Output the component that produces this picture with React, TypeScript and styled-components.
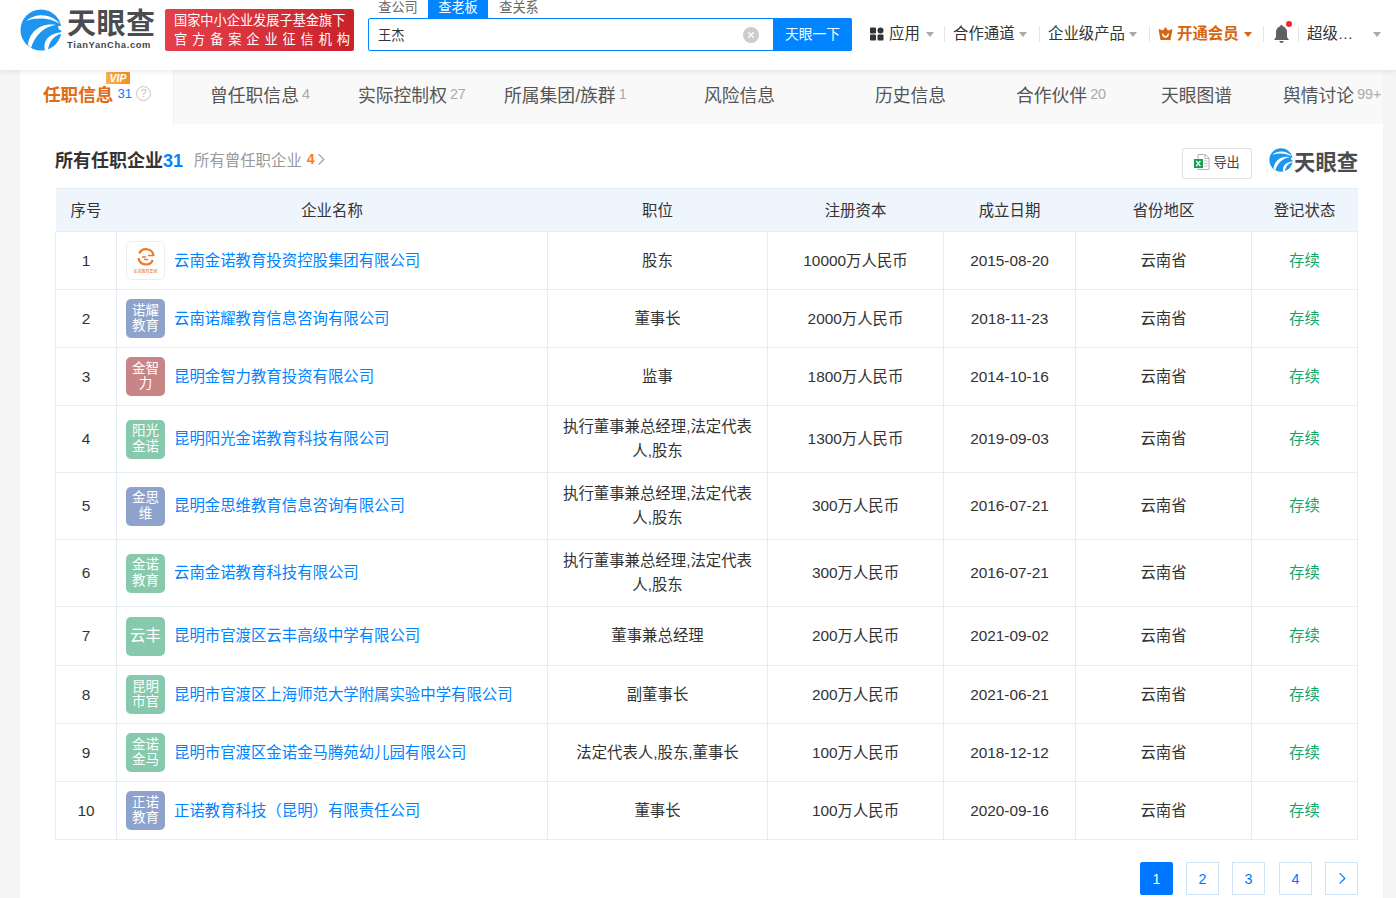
import React from "react";
import styled, { createGlobalStyle } from "styled-components";

const FONT = `"Liberation Sans", "Noto Sans CJK SC", sans-serif`;

const Global = createGlobalStyle`
  html, body { margin: 0; padding: 0; height: 898px; overflow: hidden; background: #f5f5f5; }
  body { font-family: ${FONT}; color: #333; }
  * { box-sizing: border-box; }
`;

const Header = styled.header`
  position: relative;
  z-index: 2;
  height: 70px;
  background: #fff;
  box-shadow: 0 1px 6px rgba(0, 0, 0, 0.1);
  display: flex;
  align-items: flex-start;
  padding-left: 20px;
`;
const LogoWrap = styled.div`
  display: flex;
  align-items: flex-start;
  width: 145px;
  padding-top: 9px;
  flex: none;
`;
const LogoWord = styled.div`
  margin-left: 5px;
  display: flex;
  flex-direction: column;
  width: 90px;
`;
const LogoCn = styled.div`
  font-size: 29px;
  line-height: 30px;
  font-weight: 700;
  color: #4a4c50;
  letter-spacing: 0.5px;
  white-space: nowrap;
`;
const LogoEn = styled.div`
  font-size: 9.4px;
  line-height: 12px;
  font-weight: 700;
  color: #44464a;
  letter-spacing: 0.62px;
  white-space: nowrap;
`;
const Banner = styled.div`
  width: 189px;
  height: 42px;
  margin-top: 9px;
  flex: none;
  border-radius: 2px;
  background: linear-gradient(90deg, #e5404a, #c9222a);
  color: #fff;
  font-size: 13.2px;
  line-height: 19px;
  padding: 1.5px 0 0 9px;
  white-space: nowrap;
`;
const BannerSpaced = styled.div`
  letter-spacing: 4.9px;
`;
const SearchBlock = styled.div`
  margin-left: 14px;
  width: 484px;
  flex: none;
`;
const SearchTabs = styled.div`
  display: flex;
  height: 18px;
  align-items: center;
`;
const SearchTab = styled.div<{ $on?: boolean; $w: number }>`
  width: ${(p) => p.$w}px;
  height: 18px;
  line-height: 15px;
  font-size: 13.2px;
  text-align: center;
  color: ${(p) => (p.$on ? "#fff" : "#666")};
  background: ${(p) => (p.$on ? "#0084ff" : "transparent")};
  overflow: hidden;
`;
const SearchRow = styled.div`
  height: 33px;
  display: flex;
  border: 1px solid #0084ff;
  border-radius: 2px;
  background: #fff;
`;
const SearchInput = styled.div`
  flex: 1;
  display: flex;
  align-items: center;
  justify-content: space-between;
  padding: 0 14px 0 9px;
  font-size: 13.2px;
  color: #333;
`;
const SearchBtn = styled.div`
  width: 79px;
  margin: -1px -1px -1px 0;
  background: #0084ff;
  border-radius: 0 2px 2px 0;
  color: #fff;
  font-size: 13.8px;
  line-height: 33px;
  text-align: center;
`;
const Nav = styled.nav`
  display: flex;
  align-items: center;
  height: 18px;
  margin-top: 25px;
  margin-left: 18px;
  flex: 1;
`;
const NavItem = styled.div<{ $w: number; $pad?: number; $gold?: boolean; $bold?: boolean; $sep?: boolean }>`
  width: ${(p) => p.$w}px;
  padding-left: ${(p) => p.$pad ?? 0}px;
  flex: none;
  display: flex;
  align-items: center;
  height: 16px;
  font-size: 15.4px;
  line-height: 16px;
  white-space: nowrap;
  color: ${(p) => (p.$gold ? "#d5650e" : "#333")};
  font-weight: ${(p) => (p.$bold ? 700 : 400)};
  border-right: ${(p) => (p.$sep ? "1px solid #e5e5e5" : "none")};
`;
const Caret = styled.span<{ $gold?: boolean; $gap?: number }>`
  width: 0;
  height: 0;
  margin-left: ${(p) => p.$gap ?? 6}px;
  border-left: 4px solid transparent;
  border-right: 4px solid transparent;
  border-top: 5px solid ${(p) => (p.$gold ? "#d5650e" : "#aaa")};
`;
const BellBox = styled.span`
  position: relative;
  display: block;
  width: 18px;
  height: 20px;
`;
const BellDot = styled.span`
  position: absolute;
  top: -3px;
  right: -1px;
  width: 6px;
  height: 6px;
  border-radius: 50%;
  background: #f5222d;
`;
const NavIcon = styled.span<{ $gap?: number }>`
  display: inline-flex;
  margin-right: ${(p) => p.$gap ?? 5}px;
`;

const TabsBar = styled.div`
  height: 54px;
  background: #f9f9f9;
  margin: 0 13px 0 20px;
  display: flex;
  align-items: stretch;
`;
const ActiveTab = styled.div`
  position: relative;
  width: 154px;
  background: #fff;
  border-right: 1px solid #f0f0f0;
  display: flex;
  align-items: center;
  padding: 0 0 7px 23px;
  flex: none;
`;
const ActiveLabel = styled.span`
  font-size: 17.6px;
  font-weight: 700;
  color: #e26a14;
  white-space: nowrap;
`;
const ActiveCount = styled.span`
  font-size: 13.2px;
  color: #0084ff;
  margin-left: 4px;
`;
const HelpIcon = styled.span`
  width: 15px;
  height: 15px;
  margin-left: 4px;
  border: 1px solid #c4c4c4;
  border-radius: 50%;
  color: #c0c0c0;
  font-size: 11px;
  line-height: 13px;
  text-align: center;
`;
const VipBadge = styled.span`
  position: absolute;
  left: 86px;
  top: 2px;
  width: 24px;
  height: 12px;
  background: linear-gradient(90deg, #f9b24e, #ef8f23);
  border-radius: 1px;
  color: #fff;
  font-size: 10.5px;
  font-weight: 700;
  font-style: italic;
  line-height: 12px;
  text-align: center;
`;
const TabTrack = styled.div`
  flex: 1;
  display: flex;
  padding-left: 36px;
`;
const Tab = styled.div<{ $w: number }>`
  width: ${(p) => p.$w}px;
  flex: none;
  height: 54px;
  padding-bottom: 7px;
  display: flex;
  align-items: center;
  white-space: nowrap;
  font-size: 17.8px;
  color: #555;
`;
const TabCount = styled.span`
  font-size: 14.3px;
  color: #aaa;
  margin-left: 3px;
`;

const Main = styled.main`
  margin: 0 13px 0 20px;
  height: 774px;
  background: #fff;
  padding: 0 25px 0 35px;
`;
const TitleRow = styled.div`
  height: 64px;
  display: flex;
  align-items: flex-start;
  padding-top: 25px;
`;
const Title = styled.h2`
  margin: 0;
  font-size: 18px;
  line-height: 24px;
  font-weight: 700;
  color: #333;
  white-space: nowrap;
`;
const TitleCount = styled.span`
  color: #0084ff;
`;
const Former = styled.div`
  display: flex;
  align-items: center;
  height: 20px;
  margin-left: 11px;
  font-size: 15.4px;
  color: #999;
  white-space: nowrap;
`;
const FormerCount = styled.b`
  color: #ff7a1a;
  margin: 0 2px 0 5px;
  font-size: 14.3px;
`;
const Spacer = styled.div`
  flex: 1;
`;
const Export = styled.div`
  width: 70px;
  height: 31px;
  margin-top: -1px;
  padding-bottom: 4px;
  border: 1px solid #e1e1e1;
  border-radius: 2px;
  display: flex;
  align-items: center;
  justify-content: center;
  gap: 3px;
  font-size: 13.2px;
  color: #444;
`;
const MiniLogo = styled.div`
  display: flex;
  align-items: center;
  margin-left: 17px;
  margin-top: -4px;
  height: 30px;
`;
const MiniWord = styled.span`
  font-size: 21.3px;
  font-weight: 700;
  color: #4a4c50;
  margin-left: 1px;
  white-space: nowrap;
`;

const Table = styled.table`
  width: 1302px;
  table-layout: fixed;
  border-collapse: collapse;
  font-size: 15.4px;
  color: #333;
`;
const Th = styled.th<{ $w: number }>`
  width: ${(p) => p.$w}px;
  height: 43px;
  padding: 0 0 3px;
  background: #eef5fc;
  border: 1px solid #e4ecf4;
  border-left: none;
  border-right: none;
  font-weight: 400;
  font-size: 15.4px;
  text-align: center;
`;
const Td = styled.td`
  padding: 0 15px;
  border: 1px solid #e4ecf4;
  text-align: center;
  line-height: 24px;
`;
const Tr = styled.tr<{ $h: number }>`
  height: ${(p) => p.$h}px;
`;
const NameTd = styled(Td)`
  padding: 0 0 0 9px;
  text-align: left;
`;
const NameCell = styled.div`
  display: flex;
  align-items: center;
  gap: 9px;
`;
const Avatar = styled.div<{ $bg: string; $big?: boolean }>`
  width: 39px;
  height: 39px;
  flex: none;
  display: flex;
  align-items: center;
  justify-content: center;
  text-align: center;
  border-radius: 5px;
  background: ${(p) => p.$bg};
  border: ${(p) => (p.$bg === "#fff" ? "1px solid #eee" : "none")};
  color: #fff;
  font-size: ${(p) => (p.$big ? "15.4px" : "13.5px")};
  line-height: 15.5px;
  padding: 0 2px 1px;
  flex-direction: column;
  white-space: nowrap;
`;
const LogoMini = styled.span`
  font-size: 4px;
  line-height: 5px;
  color: #e8772e;
  white-space: nowrap;
  margin-top: 2px;
`;
const CompanyLink = styled.a`
  color: #0084ff;
  font-size: 15.4px;
  white-space: nowrap;
`;
const Status = styled.span`
  color: #12a66a;
`;

const Pager = styled.div`
  margin-top: 22px;
  display: flex;
  justify-content: flex-end;
  gap: 13px;
  & > :nth-child(4) {
    margin-left: 1px;
  }
`;
const PageBtn = styled.div<{ $on?: boolean }>`
  width: 33px;
  height: 33px;
  border: 1px solid ${(p) => (p.$on ? "#0077ff" : "#cfe4fb")};
  border-radius: ${(p) => (p.$on ? "2px" : "0")};
  background: ${(p) => (p.$on ? "#0077ff" : "#fff")};
  color: ${(p) => (p.$on ? "#fff" : "#0077ff")};
  font-size: 14.3px;
  display: flex;
  align-items: center;
  justify-content: center;
`;

function Swirl({ size }: { size: number }) {
  return (
    <svg width={size} height={size} viewBox="0 0 42 42" style={{ flex: "none" }}>
      <circle cx="21" cy="21" r="20.500" fill="#1e96f0" />
      <path d="M6 12C16 3 32 5 40 15 30 9 18 8 6 12Z" fill="#fff" />
      <path d="M8 36C9 24 20 13 36 16 25 17 15 26 11 39Z" fill="#fff" />
      <path d="M25 41C23 33 27 25 42 23V24.500C33 27 29 33 28 41Z" fill="#fff" />
      <path d="M38 17L42 17V22L39 20.500Z" fill="#fff" />
    </svg>
  );
}

function XlsIcon() {
  return (
    <svg width="16" height="16" viewBox="0 0 16 16">
      <path d="M4 .5h7.500L15 4v11.500H4Z" fill="#fff" stroke="#b5b5b5" />
      <path d="M11 .5V4.500H15" fill="none" stroke="#b5b5b5" />
      <path d="M10 7h3.500M10 9.500h3.500M10 12h3.500" stroke="#c5c5c5" />
      <rect x="0" y="5" width="9" height="9" fill="#1b9d57" />
      <path d="M2.200 6.800l4.200 5.400M6.400 6.800l-4.200 5.400" stroke="#fff" strokeWidth="1.300" />
    </svg>
  );
}

function AppsIcon() {
  return (
    <svg width="14" height="14" viewBox="0 0 14 14" fill="#333">
      <rect x="0" y="0.500" width="6" height="6" rx="1" />
      <circle cx="10.500" cy="3.500" r="3" />
      <rect x="0" y="7.500" width="6" height="6" rx="1" />
      <rect x="7.500" y="7.500" width="6" height="6" rx="1" />
    </svg>
  );
}

function CrownIcon() {
  return (
    <svg width="15" height="14" viewBox="0 0 15 14">
      <path d="M7.500 0 10 3.500 14.500 2 12.500 13H2.500L.5 2 5 3.500Z" fill="#d5650e" />
      <path d="M4.500 6.500c.5 2.500 1.500 3.500 3 3.500s2.500-1 3-3.500" fill="none" stroke="#fff" strokeWidth="1.400" />
    </svg>
  );
}

function BellIcon() {
  return (
    <svg width="17" height="20" viewBox="0 0 17 20" fill="#5d6166">
      <path d="M8.500 1c.8 0 1.200.5 1.200 1.200C12.400 3 14 5.200 14 8v5l2 3H1l2-3V8c0-2.800 1.600-5 4.300-5.800C7.300 1.500 7.700 1 8.500 1Z" />
      <path d="M6.300 17h4.400c-.2 1.200-1.100 2-2.200 2s-2-.8-2.200-2Z" />
    </svg>
  );
}

function ClearIcon() {
  return (
    <svg width="16" height="16" viewBox="0 0 16 16">
      <circle cx="8" cy="8" r="8" fill="#ccc" />
      <path d="M5.200 5.200l5.600 5.600M10.800 5.200l-5.600 5.600" stroke="#fff" strokeWidth="1.300" />
    </svg>
  );
}

function Chevron({ color, size }: { color: string; size: number }) {
  return (
    <svg width={size} height={size * 1.6} viewBox="0 0 10 16">
      <path d="M2 1.500 8.500 8 2 14.500" fill="none" stroke={color} strokeWidth="1.500" />
    </svg>
  );
}

function GroupLogo() {
  return (
    <svg width="20" height="20" viewBox="0 0 20 20">
      <path d="M3.200 6.500A7.500 7.500 0 0 1 17.500 9" fill="none" stroke="#ea7a2c" strokeWidth="2.200" />
      <path d="M16.800 13A7.500 7.500 0 0 1 2.500 11" fill="none" stroke="#ea7a2c" strokeWidth="2.200" />
      <path d="M6 10h4M12 8.500h5M8 12.500h4" stroke="#ea7a2c" strokeWidth="1.600" />
    </svg>
  );
}

const GREEN = "#86c9ad";
const BLUE = "#8ea3cc";
const RED = "#c78585";

type Row = {
  n: number;
  h: number;
  av: string[];
  bg: string;
  name: string;
  role: string;
  cap: string;
  date: string;
};

const rows: Row[] = [
  { n: 1, h: 58, av: [], bg: "#fff", name: "云南金诺教育投资控股集团有限公司", role: "股东", cap: "10000万人民币", date: "2015-08-20" },
  { n: 2, h: 58, av: ["诺耀", "教育"], bg: BLUE, name: "云南诺耀教育信息咨询有限公司", role: "董事长", cap: "2000万人民币", date: "2018-11-23" },
  { n: 3, h: 58, av: ["金智", "力"], bg: RED, name: "昆明金智力教育投资有限公司", role: "监事", cap: "1800万人民币", date: "2014-10-16" },
  { n: 4, h: 67, av: ["阳光", "金诺"], bg: GREEN, name: "昆明阳光金诺教育科技有限公司", role: "执行董事兼总经理,法定代表人,股东", cap: "1300万人民币", date: "2019-09-03" },
  { n: 5, h: 67, av: ["金思", "维"], bg: BLUE, name: "昆明金思维教育信息咨询有限公司", role: "执行董事兼总经理,法定代表人,股东", cap: "300万人民币", date: "2016-07-21" },
  { n: 6, h: 67, av: ["金诺", "教育"], bg: GREEN, name: "云南金诺教育科技有限公司", role: "执行董事兼总经理,法定代表人,股东", cap: "300万人民币", date: "2016-07-21" },
  { n: 7, h: 59, av: ["云丰"], bg: GREEN, name: "昆明市官渡区云丰高级中学有限公司", role: "董事兼总经理", cap: "200万人民币", date: "2021-09-02" },
  { n: 8, h: 58, av: ["昆明", "市官"], bg: GREEN, name: "昆明市官渡区上海师范大学附属实验中学有限公司", role: "副董事长", cap: "200万人民币", date: "2021-06-21" },
  { n: 9, h: 58, av: ["金诺", "金马"], bg: GREEN, name: "昆明市官渡区金诺金马腾苑幼儿园有限公司", role: "法定代表人,股东,董事长", cap: "100万人民币", date: "2018-12-12" },
  { n: 10, h: 58, av: ["正诺", "教育"], bg: BLUE, name: "正诺教育科技（昆明）有限责任公司", role: "董事长", cap: "100万人民币", date: "2020-09-16" },
];

const tabs = [
  { w: 148, label: "曾任职信息", count: "4" },
  { w: 146, label: "实际控制权", count: "27" },
  { w: 200, label: "所属集团/族群", count: "1" },
  { w: 171, label: "风险信息" },
  { w: 141, label: "历史信息" },
  { w: 145, label: "合作伙伴", count: "20" },
  { w: 122, label: "天眼图谱" },
  { w: 100, label: "舆情讨论", count: "99+" },
];

export default function App() {
  return (
    <>
      <Global />
      <Header>
        <LogoWrap>
          <Swirl size={42} />
          <LogoWord>
            <LogoCn>天眼查</LogoCn>
            <LogoEn>TianYanCha.com</LogoEn>
          </LogoWord>
        </LogoWrap>
        <Banner>
          <div>国家中小企业发展子基金旗下</div>
          <BannerSpaced>官方备案企业征信机构</BannerSpaced>
        </Banner>
        <SearchBlock>
          <SearchTabs>
            <SearchTab $w={60}>查公司</SearchTab>
            <SearchTab $w={60} $on>查老板</SearchTab>
            <SearchTab $w={62}>查关系</SearchTab>
          </SearchTabs>
          <SearchRow>
            <SearchInput>
              王杰
              <ClearIcon />
            </SearchInput>
            <SearchBtn>天眼一下</SearchBtn>
          </SearchRow>
        </SearchBlock>
        <Nav>
          <NavItem $w={75} $sep>
            <NavIcon><AppsIcon /></NavIcon>应用<Caret />
          </NavItem>
          <NavItem $w={95} $pad={8} $sep>
            合作通道<Caret $gap={4} />
          </NavItem>
          <NavItem $w={110} $pad={8} $sep>
            企业级产品<Caret $gap={4} />
          </NavItem>
          <NavItem $w={114} $pad={8} $gold $bold $sep>
            <NavIcon $gap={4}><CrownIcon /></NavIcon>开通会员<Caret $gold $gap={5} />
          </NavItem>
          <NavItem $w={35} $pad={9} $sep>
            <BellBox>
              <BellIcon />
              <BellDot />
            </BellBox>
          </NavItem>
          <NavItem $w={90} $pad={8}>
            超级…<Caret $gap={20} />
          </NavItem>
        </Nav>
      </Header>
      <TabsBar>
        <ActiveTab>
          <VipBadge>VIP</VipBadge>
          <ActiveLabel>任职信息</ActiveLabel>
          <ActiveCount>31</ActiveCount>
          <HelpIcon>?</HelpIcon>
        </ActiveTab>
        <TabTrack>
          {tabs.map((t) => (
            <Tab key={t.label} $w={t.w}>
              {t.label}
              {t.count && <TabCount>{t.count}</TabCount>}
            </Tab>
          ))}
        </TabTrack>
      </TabsBar>
      <Main>
        <TitleRow>
          <Title>
            所有任职企业<TitleCount>31</TitleCount>
          </Title>
          <Former>
            所有曾任职企业<FormerCount>4</FormerCount>
            <Chevron color="#999" size={8} />
          </Former>
          <Spacer />
          <Export>
            <XlsIcon />
            导出
          </Export>
          <MiniLogo>
            <Swirl size={24} />
            <MiniWord>天眼查</MiniWord>
          </MiniLogo>
        </TitleRow>
        <Table>
          <thead>
            <tr>
              <Th $w={61}>序号</Th>
              <Th $w={431}>企业名称</Th>
              <Th $w={220}>职位</Th>
              <Th $w={176}>注册资本</Th>
              <Th $w={132}>成立日期</Th>
              <Th $w={176}>省份地区</Th>
              <Th $w={106}>登记状态</Th>
            </tr>
          </thead>
          <tbody>
            {rows.map((r) => (
              <Tr key={r.n} $h={r.h}>
                <Td>{r.n}</Td>
                <NameTd>
                  <NameCell>
                    <Avatar $bg={r.bg} $big={r.av.length === 1}>
                      {r.av.length === 0 ? (
                        <>
                          <GroupLogo />
                          <LogoMini>金诺教育集团</LogoMini>
                        </>
                      ) : (
                        r.av.map((line) => <div key={line}>{line}</div>)
                      )}
                    </Avatar>
                    <CompanyLink>{r.name}</CompanyLink>
                  </NameCell>
                </NameTd>
                <Td>{r.role}</Td>
                <Td>{r.cap}</Td>
                <Td>{r.date}</Td>
                <Td>云南省</Td>
                <Td>
                  <Status>存续</Status>
                </Td>
              </Tr>
            ))}
          </tbody>
        </Table>
        <Pager>
          <PageBtn $on>1</PageBtn>
          <PageBtn>2</PageBtn>
          <PageBtn>3</PageBtn>
          <PageBtn>4</PageBtn>
          <PageBtn>
            <Chevron color="#0077ff" size={8} />
          </PageBtn>
        </Pager>
      </Main>
    </>
  );
}
